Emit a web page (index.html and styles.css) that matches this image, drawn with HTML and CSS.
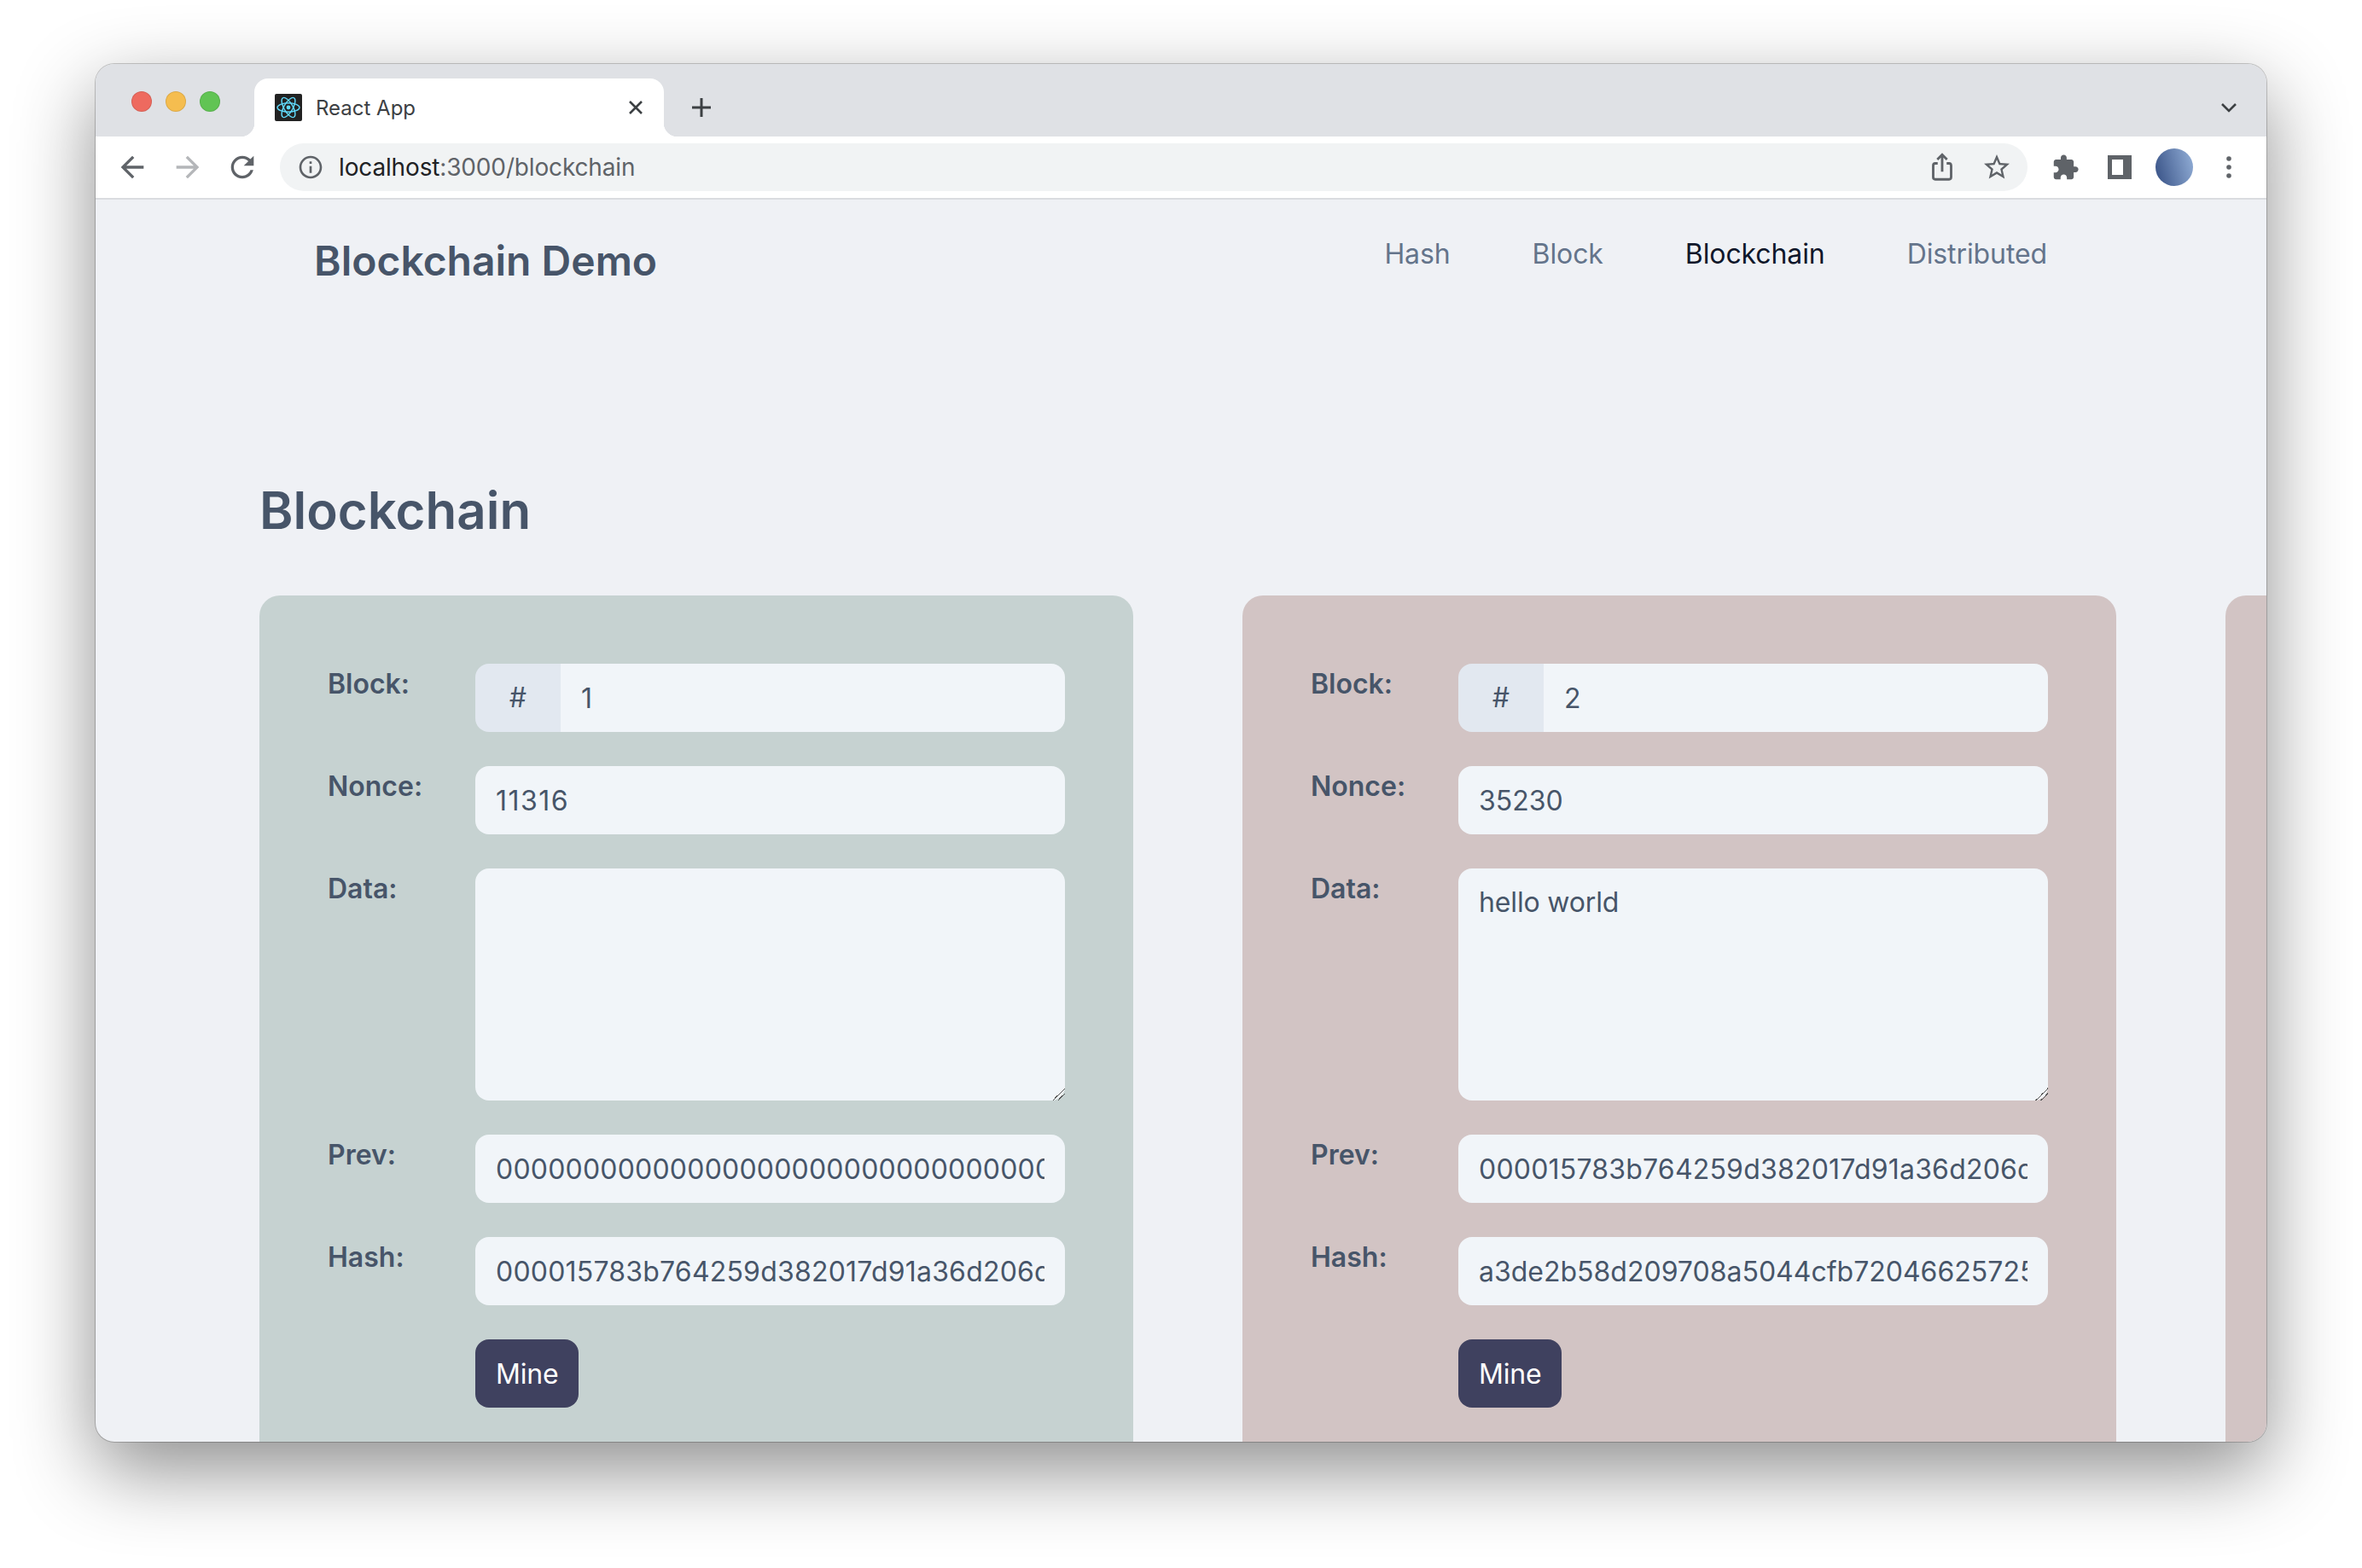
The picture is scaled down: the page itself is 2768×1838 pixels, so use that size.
FILE: index.html
```html
<!DOCTYPE html>
<html lang="en">
<head>
    <meta charset="UTF-8">
    <title>Blockchain Demo</title>
    <link rel="stylesheet" href="styles.css">
</head>
<body>
    <div class="window">
        <div class="tabstrip">
            <div class="lights">
                <span class="light red"></span>
                <span class="light yellow"></span>
                <span class="light green"></span>
            </div>
            <div class="tab">
                <svg class="favicon" viewBox="0 0 32 32">
                    <rect width="32" height="32" rx="2" fill="#222"/>
                    <g fill="none" stroke="#61dafb" stroke-width="1.4">
                        <ellipse cx="16" cy="16" rx="13" ry="5.2"/>
                        <ellipse cx="16" cy="16" rx="13" ry="5.2" transform="rotate(60 16 16)"/>
                        <ellipse cx="16" cy="16" rx="13" ry="5.2" transform="rotate(120 16 16)"/>
                    </g>
                    <circle cx="16" cy="16" r="2.4" fill="#61dafb"/>
                </svg>
                <span class="tab-title">React App</span>
                <svg class="tab-close" viewBox="0 0 20 20">
                    <path d="M3 3l14 14M17 3L3 17" stroke="#3c4043" stroke-width="2.6" fill="none"/>
                </svg>
            </div>
            <div class="new-tab">
                <svg viewBox="0 0 24 24" width="24" height="24">
                    <path d="M12 1v22M1 12h22" stroke="#3c4043" stroke-width="3" fill="none"/>
                </svg>
            </div>
            <div class="tab-menu">
                <svg viewBox="0 0 20 12" width="20" height="12">
                    <path d="M2 2l8 8 8-8" stroke="#3c4043" stroke-width="2.6" fill="none"/>
                </svg>
            </div>
        </div>

        <div class="toolbar">
            <div class="tool nav-tool">
                <svg class="nav-icon" viewBox="0 0 24 24"><path fill="#5f6368" d="M20 11H7.83l5.59-5.59L12 4l-8 8 8 8 1.41-1.41L7.83 13H20v-2z"/></svg>
            </div>
            <div class="tool nav-tool">
                <svg class="nav-icon" viewBox="0 0 24 24"><path fill="#b4b6b9" d="M12 4l-1.41 1.41L16.17 11H4v2h12.17l-5.58 5.59L12 20l8-8z"/></svg>
            </div>
            <div class="tool nav-tool">
                <svg class="nav-icon" viewBox="0 0 24 24"><path fill="#5f6368" d="M17.65 6.35C16.2 4.9 14.21 4 12 4c-4.42 0-7.99 3.58-7.99 8s3.57 8 7.99 8c3.73 0 6.84-2.55 7.73-6h-2.08c-.82 2.33-3.04 4-5.65 4-3.31 0-6-2.69-6-6s2.69-6 6-6c1.66 0 3.14.69 4.22 1.78L13 11h7V4l-2.35 2.35z"/></svg>
            </div>
            <div class="omnibox">
                <svg class="info" viewBox="0 0 24 24"><path fill="#5f6368" d="M11 7h2v2h-2zm0 4h2v6h-2zm1-9C6.48 2 2 6.48 2 12s4.48 10 10 10 10-4.48 10-10S17.52 2 12 2zm0 18c-4.41 0-8-3.59-8-8s3.59-8 8-8 8 3.59 8 8-3.59 8-8 8z"/></svg>
                <span class="url">localhost<span class="url-rest">:3000/blockchain</span></span>
                <div class="tool push">
                    <svg class="icon" viewBox="0 0 24 24"><path fill="none" stroke="#5f6368" stroke-width="1.9" d="M8.5 9H6.6C5.7 9 5 9.7 5 10.6v9.3c0 .9.7 1.6 1.6 1.6h10.8c.9 0 1.6-.7 1.6-1.6v-9.3c0-.9-.7-1.6-1.6-1.6h-1.9M12 15.5V2.5M8.2 6L12 2.2 15.8 6"/></svg>
                </div>
                <div class="tool">
                    <svg class="icon" viewBox="0 0 24 24"><path fill="#5f6368" d="M22 9.24l-7.19-.62L12 2 9.19 8.63 2 9.24l5.46 4.73L5.82 21 12 17.27 18.18 21l-1.63-7.03L22 9.24zM12 15.4l-3.76 2.27 1-4.28-3.32-2.88 4.38-.38L12 6.1l1.71 4.04 4.38.38-3.32 2.88 1 4.28L12 15.4z"/></svg>
                </div>
            </div>
            <div class="tool">
                <svg class="puzzle" viewBox="0 0 24 24"><path fill="#5f6368" d="M20.5 11H19V7c0-1.1-.9-2-2-2h-4V3.5C13 2.12 11.88 1 10.5 1S8 2.12 8 3.5V5H4c-1.1 0-1.99.9-1.99 2v3.8H3.5c1.49 0 2.7 1.21 2.7 2.7s-1.21 2.7-2.7 2.7H2V20c0 1.1.9 2 2 2h3.8v-1.5c0-1.49 1.21-2.7 2.7-2.7 1.49 0 2.7 1.21 2.7 2.7V22H17c1.1 0 2-.9 2-2v-4h1.5c1.38 0 2.5-1.12 2.5-2.5S21.88 11 20.5 11z"/></svg>
            </div>
            <div class="tool"><span class="side-panel"></span></div>
            <div class="tool"><span class="avatar"></span></div>
            <div class="tool">
                <svg viewBox="0 0 6 26" width="6" height="26">
                    <circle cx="3" cy="3" r="2.8" fill="#5f6368"/>
                    <circle cx="3" cy="13" r="2.8" fill="#5f6368"/>
                    <circle cx="3" cy="23" r="2.8" fill="#5f6368"/>
                </svg>
            </div>
        </div>

        <div class="page">
            <nav class="nav">
                <div class="brand">Blockchain Demo</div>
                <div class="links">
                    <a href="#">Hash</a>
                    <a href="#">Block</a>
                    <a href="#" class="active">Blockchain</a>
                    <a href="#">Distributed</a>
                </div>
            </nav>

            <main class="main">
                <h1>Blockchain</h1>
                <div class="chain">
                    <form class="card green-card">
                        <label>Block:</label>
                        <div class="addon-field">
                            <span class="addon">#</span>
                            <input type="text" value="1">
                        </div>
                        <label>Nonce:</label>
                        <input type="text" class="nonce-ones" value="11316">
                        <label>Data:</label>
                        <textarea></textarea>
                        <label>Prev:</label>
                        <input type="text" class="digit-run" value="0000000000000000000000000000000000000000000000000000000000000000">
                        <label>Hash:</label>
                        <input type="text" class="digit-run" value="000015783b764259d382017d91a36d206d0a8e8b1c5e6a3f7d2c94b01e6f8a27">
                        <button type="button" class="mine">Mine</button>
                    </form>

                    <form class="card red-card">
                        <label>Block:</label>
                        <div class="addon-field">
                            <span class="addon">#</span>
                            <input type="text" value="2">
                        </div>
                        <label>Nonce:</label>
                        <input type="text" value="35230">
                        <label>Data:</label>
                        <textarea class="data-text">hello world</textarea>
                        <label>Prev:</label>
                        <input type="text" class="digit-run" value="000015783b764259d382017d91a36d206d0a8e8b1c5e6a3f7d2c94b01e6f8a27">
                        <label>Hash:</label>
                        <input type="text" value="a3de2b58d209708a5044cfb72046625725f1c08e93b7d46a1e2f05c8b36d9e74">
                        <button type="button" class="mine">Mine</button>
                    </form>

                    <div class="card red-card"></div>
                </div>
            </main>
        </div>
    </div>
</body>
</html>
```

FILE: styles.css
```css
* {
    box-sizing: border-box;
}

html, body {
    margin: 0;
    height: 100%;
}

body {
    background-color: #ffffff;
    font-family: Inter, "Liberation Sans", sans-serif;
    padding: 75px 112px 0;
    overflow: hidden;
}

.window {
    height: 1615px;
    border-radius: 22px;
    overflow: hidden;
    display: flex;
    flex-direction: column;
    background-color: #eff1f5;
    box-shadow: 0 0 0 1px rgba(0, 0, 0, 0.2), 0 33px 93px rgba(0, 0, 0, 0.45);
}

/* tab strip */
.tabstrip {
    flex: none;
    height: 85px;
    background-color: #dfe1e5;
    display: flex;
    align-items: flex-end;
}

.lights {
    align-self: flex-start;
    display: flex;
    gap: 16px;
    margin: 32px 40px 0 42px;
}

.light {
    width: 24px;
    height: 24px;
    border-radius: 50%;
    border: 1px solid rgba(0, 0, 0, 0.1);
}

.red { background-color: #ee6a5f; }
.yellow { background-color: #f5bd4f; }
.green { background-color: #61c454; }

.tab {
    position: relative;
    width: 480px;
    height: 68px;
    padding: 0 24px;
    background-color: #ffffff;
    border-radius: 16px 16px 0 0;
    display: flex;
    align-items: center;
}

.tab::before,
.tab::after {
    content: "";
    position: absolute;
    bottom: 0;
    width: 16px;
    height: 16px;
}

.tab::before {
    left: -16px;
    background: radial-gradient(circle at 0 0, transparent 16px, #ffffff 16.5px);
}

.tab::after {
    right: -16px;
    background: radial-gradient(circle at 100% 0, transparent 16px, #ffffff 16.5px);
}

.favicon {
    width: 32px;
    height: 32px;
    flex: none;
}

.tab-title {
    margin-left: 16px;
    font-size: 24px;
    color: #3c4043;
}

.tab-close {
    width: 20px;
    height: 20px;
    margin-left: auto;
    margin-right: -1px;
}

.new-tab {
    width: 48px;
    height: 68px;
    margin-left: 20px;
    display: flex;
    align-items: center;
    justify-content: center;
}

.tab-menu {
    width: 64px;
    height: 68px;
    margin-left: auto;
    margin-right: 12px;
    display: flex;
    align-items: center;
    justify-content: center;
}

/* toolbar */
.toolbar {
    flex: none;
    height: 74px;
    padding: 8px 12px 8px 11px;
    background-color: #ffffff;
    border-bottom: 2px solid #dadce0;
    display: flex;
    align-items: center;
}

.tool {
    flex: none;
    width: 64px;
    height: 56px;
    display: flex;
    align-items: center;
    justify-content: center;
}

.nav-tool {
    width: 64.5px;
}

.icon {
    width: 36px;
    height: 36px;
}

.nav-icon {
    width: 40px;
    height: 40px;
}

.puzzle {
    width: 33px;
    height: 33px;
}

.omnibox {
    flex: 1;
    height: 56px;
    margin: 0 12px 0 11.5px;
    padding: 0 4px 0 20px;
    background-color: #f1f3f4;
    border-radius: 28px;
    display: flex;
    align-items: center;
}

.info {
    width: 32px;
    height: 32px;
    flex: none;
}

.url {
    margin-left: 17px;
    font-size: 28px;
    letter-spacing: -0.15px;
    color: #202124;
}

.url-rest {
    color: #5f6368;
}

.push {
    margin-left: auto;
}

.side-panel {
    width: 28px;
    height: 28px;
    border: 5px solid #5f6368;
    border-right-width: 10px;
    background-color: #ffffff;
}

.avatar {
    width: 44px;
    height: 44px;
    border-radius: 50%;
    background: linear-gradient(75deg, #3a5488 5%, #8fabd4 95%);
}

/* page */
.page {
    flex: 1;
    min-height: 0;
    overflow: hidden;
}

.nav {
    display: flex;
    justify-content: space-between;
    align-items: flex-start;
    padding: 40px 257px 0 256px;
}

.brand {
    font-size: 48px;
    line-height: 64px;
    font-weight: 600;
    color: #475569;
}

.links {
    display: flex;
    gap: 96px;
}

.links a {
    font-size: 32px;
    line-height: 48px;
    letter-spacing: -0.1px;
    color: #64748b;
    text-decoration: none;
}

.links a.active {
    color: #0f172a;
}

.main {
    padding: 224px 0 0 192px;
}

h1 {
    margin: 0 0 64px;
    font-size: 60px;
    line-height: 72px;
    font-weight: 600;
    color: #475569;
}

.chain {
    display: flex;
    gap: 128px;
}

.card {
    flex: none;
    width: 1024px;
    padding: 80px;
    border-radius: 24px;
    display: grid;
    grid-template-columns: 173px 1fr;
    row-gap: 40px;
    align-items: start;
}

.green-card { background-color: #c6d2d1; }
.red-card { background-color: #d2c4c4; }

label {
    font-size: 32px;
    line-height: 48px;
    font-weight: 600;
    color: #475569;
}

input,
textarea {
    width: 100%;
    padding: 16px 24px;
    border: none;
    border-radius: 16px;
    outline: none;
    background-color: #f1f5f9;
    font-family: inherit;
    font-size: 32px;
    line-height: 48px;
    color: #475569;
}

input {
    height: 80px;
}

/* the 1 and 0 run a little wider in the original */
.digit-run {
    letter-spacing: 0.2px;
}

.nonce-ones {
    letter-spacing: 1.5px;
}

.data-text {
    letter-spacing: -0.15px;
}

textarea {
    display: block;
    height: 272px;
    resize: vertical;
}

textarea::-webkit-resizer {
    background: linear-gradient(135deg, transparent 50%, #555 50%, #555 56%, transparent 56%, transparent 70%, #555 70%, #555 76%, transparent 76%);
}

.addon-field {
    display: flex;
}

.addon {
    flex: none;
    width: 100px;
    height: 80px;
    background-color: #e2e8f0;
    border-radius: 16px 0 0 16px;
    font-size: 32px;
    line-height: 80px;
    text-align: center;
    color: #475569;
}

.addon-field input {
    border-radius: 0 16px 16px 0;
}

.mine {
    grid-column: 2;
    justify-self: start;
    height: 80px;
    padding: 0 24px;
    border: none;
    border-radius: 16px;
    background-color: #3f415f;
    font-family: inherit;
    font-size: 32px;
    letter-spacing: -0.2px;
    color: #ffffff;
}
```
